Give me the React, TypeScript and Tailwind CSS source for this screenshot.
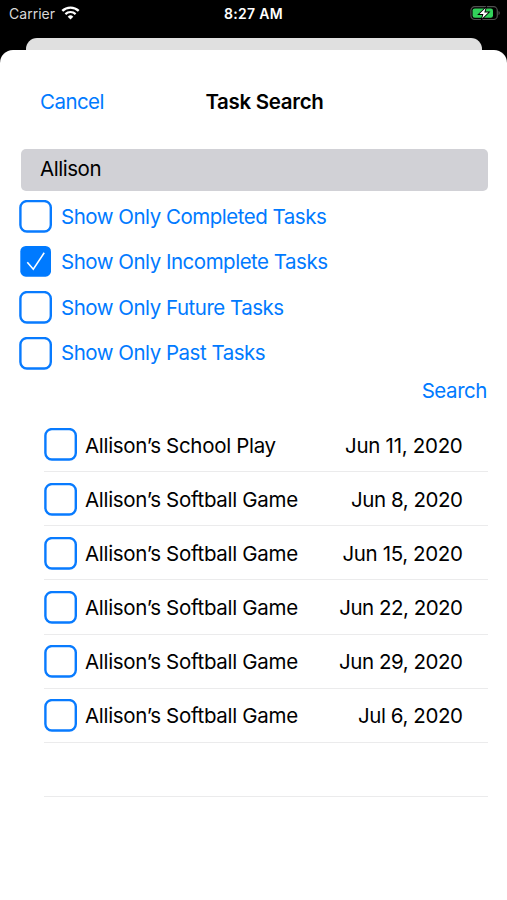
/**
 * @file App.tsx
 * @description Task search sheet with filters and a list of matching tasks.
 */

import React from 'react'

const filters = [
  { label: 'Show Only Completed Tasks', checked: false },
  { label: 'Show Only Incomplete Tasks', checked: true },
  { label: 'Show Only Future Tasks', checked: false },
  { label: 'Show Only Past Tasks', checked: false },
]

const tasks = [
  { title: 'Allison’s School Play', date: 'Jun 11, 2020', tracking: 'tracking-[-0.29px]' },
  { title: 'Allison’s Softball Game', date: 'Jun 8, 2020', tracking: 'tracking-[-0.45px]' },
  { title: 'Allison’s Softball Game', date: 'Jun 15, 2020', tracking: 'tracking-[-0.37px]' },
  { title: 'Allison’s Softball Game', date: 'Jun 22, 2020', tracking: 'tracking-[-0.5px]' },
  { title: 'Allison’s Softball Game', date: 'Jun 29, 2020', tracking: 'tracking-[-0.46px]' },
  { title: 'Allison’s Softball Game', date: 'Jul 6, 2020', tracking: 'tracking-[-0.42px]' },
]

/**
 * Rounded square that is outlined when off and filled with a tick when on.
 */
const Checkbox: React.FC<{ checked?: boolean }> = ({ checked = false }) => (
  <svg width="33" height="33" viewBox="0 0 33 33" fill="none" className="block shrink-0">
    {checked ? (
      <>
        <rect x="1.3" y="1" width="30.7" height="30.7" rx="5.5" fill="#007aff" />
        <path d="M8.3 17.2 14.3 24.2 25.2 7.8" stroke="#fff" strokeWidth="1.6" />
      </>
    ) : (
      <rect x="1.4" y="1.1" width="30.4" height="30.4" rx="6.5" stroke="#087bff" strokeWidth="2.4" />
    )}
  </svg>
)

const WifiIcon: React.FC = () => (
  <svg width="19" height="14" viewBox="0 0 19 14" className="ml-[6px] block" fill="none">
    <path d="M1.3 4.9a11.8 11.8 0 0 1 16.4 0" stroke="#fff" strokeWidth="2.4" />
    <path d="M4.4 8.1a7.3 7.3 0 0 1 10.2 0" stroke="#fff" strokeWidth="2.2" />
    <path d="M6.7 10.7a4 4 0 0 1 5.6 0L9.5 13.5z" fill="#fff" />
  </svg>
)

const BatteryIcon: React.FC = () => (
  <svg width="31" height="15" viewBox="0 0 31 15" className="block" fill="none">
    <rect x="0.9" y="0.7" width="26.4" height="12.8" rx="3.8" stroke="#505050" strokeWidth="1.2" />
    <path d="M28.5 5c1.8.7 1.8 3.5 0 4.2z" fill="#505050" />
    <rect x="2.6" y="2.4" width="20.4" height="9.4" rx="2.2" fill="#32d25b" />
    <path
      d="M15.6 2.1 9.4 8h4l-1.3 4.6L18.3 6.5h-4z"
      fill="#fff"
      stroke="#000"
      strokeWidth="1.8"
      paintOrder="stroke"
    />
  </svg>
)

const StatusBar: React.FC = () => (
  <div className="grid h-[38px] grid-cols-3 pt-[6px] text-[14px] leading-4 text-white">
    <div className="flex items-start pl-[9px] text-[#d8d8d8]">
      <span className="tracking-[0.03px]">Carrier</span>
      <WifiIcon />
    </div>
    <div className="text-center font-semibold tracking-[0.3px]">8:27 AM</div>
    <div className="flex justify-end pr-[6px]">
      <BatteryIcon />
    </div>
  </div>
)

const App: React.FC = () => {
  return (
    <div className="h-[900px] w-[507px] overflow-hidden bg-black font-['Inter',sans-serif] text-[20.5px] text-black">
      <StatusBar />

      {/* Edge of the screen behind the sheet */}
      <div className="ml-[26px] mr-[25px] h-3 rounded-t-[11px] bg-[#e0e0e0]" />

      <main className="h-[850px] rounded-t-[13px] bg-white pt-[37px]">
        <header className="grid grid-cols-[1fr_auto_1fr] items-center px-10 leading-[30px]">
          <button className="text-left tracking-[-0.55px] text-[#007aff]">Cancel</button>
          <h1 className="pl-[22px] font-semibold tracking-[-0.3px]">Task Search</h1>
          <span />
        </header>

        <div className="ml-[20.5px] mt-[31.5px] flex h-[42.5px] w-[467px] items-center rounded-[5px] bg-[#d1d1d6] pl-[19.5px]">
          <span className="tracking-[-0.45px]">Allison</span>
        </div>

        <section aria-label="Filters" className="mt-[2.5px] pl-[19px] text-[#007aff]">
          {filters.map((filter) => (
            <div key={filter.label} className="flex h-[45.6px] items-center gap-[9px]">
              <Checkbox checked={filter.checked} />
              <span className="pt-[1.5px] tracking-[-0.49px]">{filter.label}</span>
            </div>
          ))}
        </section>

        <div className="flex h-[30px] items-center justify-end pr-5 text-[#007aff]">
          <button className="tracking-[-0.45px]">Search</button>
        </div>

        <ul className="ml-11 mt-[12px] w-[443.5px]">
          {tasks.map((task) => (
            <li
              key={task.date}
              className="flex h-[54.17px] items-center border-b border-[#ebebec] pr-[25px] pt-[1px]"
            >
              <Checkbox />
              <span className="ml-2 pt-[2px] tracking-[-0.31px]">{task.title}</span>
              <span className={`ml-auto pt-[2px] ${task.tracking}`}>{task.date}</span>
            </li>
          ))}
          <li className="h-[54.17px] border-b border-[#ebebec]" />
        </ul>
      </main>
    </div>
  )
}

export default App
